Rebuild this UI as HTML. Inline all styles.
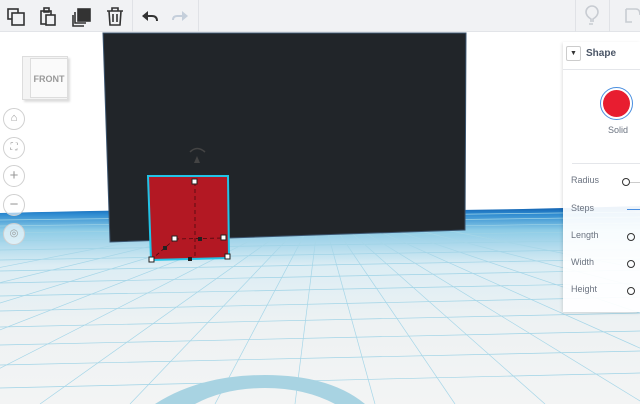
<!DOCTYPE html>
<html><head><style>
*{margin:0;padding:0;box-sizing:border-box}
body{width:640px;height:404px;overflow:hidden;font-family:"Liberation Sans",sans-serif;background:#fff;position:relative}
.tb{position:absolute;left:0;top:0;width:640px;height:32px;background:#f1f2f4;border-bottom:1px solid #e2e4e8}
.sep{position:absolute;top:0;width:1px;height:32px;background:#e0e2e6}
.panel{position:absolute;left:563px;top:42px;width:77px;height:270px;background:rgba(255,255,255,.93);box-shadow:-1px 1px 3px rgba(0,0,0,.12)}
.lbl{position:absolute;left:8px;font-size:9px;color:#6b7380}
.ring{position:absolute;width:8px;height:8px;border:1.3px solid #333;border-radius:50%}
.nav{position:absolute;left:3px;width:22px;height:22px;border:1px solid #d0d0d0;border-radius:50%;background:rgba(255,255,255,.6);color:#999;font-size:15px;line-height:19px;text-align:center}
</style></head><body>
<svg width="640" height="404" style="position:absolute;left:0;top:0">
<defs>
<linearGradient id="fl" x1="0" y1="0" x2="0" y2="1">
<stop offset="0" stop-color="#0b56a8"/><stop offset="0.04" stop-color="#2c8ad0"/><stop offset="0.12" stop-color="#8ccbe6"/><stop offset="0.3" stop-color="#dcedf4"/><stop offset="0.6" stop-color="#eef2f3"/><stop offset="1" stop-color="#f3f4f4"/>
</linearGradient>
</defs>
<path d="M0 213 Q200 208 320 210 T640 206 L640 404 L0 404Z" fill="url(#fl)"/>
<g stroke="#9fd3e6" stroke-width="0.7" fill="none">
<line x1="0" y1="220" x2="640" y2="212"/><line x1="0" y1="226" x2="640" y2="217"/><line x1="0" y1="233" x2="640" y2="223"/><line x1="0" y1="241" x2="640" y2="231"/><line x1="0" y1="250" x2="640" y2="240"/><line x1="0" y1="260" x2="640" y2="249"/><line x1="0" y1="271" x2="640" y2="259"/><line x1="0" y1="283" x2="640" y2="270"/><line x1="0" y1="296" x2="640" y2="283"/><line x1="0" y1="311" x2="640" y2="297"/><line x1="0" y1="327" x2="640" y2="313"/><line x1="0" y1="345" x2="640" y2="331"/><line x1="0" y1="365" x2="640" y2="351"/><line x1="0" y1="388" x2="640" y2="373"/>
</g>
<g stroke="#a6d6e8" stroke-width="0.7" fill="none">
<line x1="320" y1="205" x2="-700" y2="404"/><line x1="320" y1="205" x2="-500" y2="404"/><line x1="320" y1="205" x2="-330" y2="404"/><line x1="320" y1="205" x2="-190" y2="404"/><line x1="320" y1="205" x2="-70" y2="404"/><line x1="320" y1="205" x2="40" y2="404"/><line x1="320" y1="205" x2="130" y2="404"/><line x1="320" y1="205" x2="215" y2="404"/><line x1="320" y1="205" x2="295" y2="404"/><line x1="320" y1="205" x2="375" y2="404"/><line x1="320" y1="205" x2="455" y2="404"/><line x1="320" y1="205" x2="545" y2="404"/><line x1="320" y1="205" x2="645" y2="404"/><line x1="320" y1="205" x2="765" y2="404"/><line x1="320" y1="205" x2="910" y2="404"/><line x1="320" y1="205" x2="1090" y2="404"/><line x1="320" y1="205" x2="1320" y2="404"/>
</g>
<path d="M155 404 Q200 375 265 375 Q330 375 365 404 L335 404 Q305 388 265 388 Q225 388 195 404Z" fill="#a8d3e2"/>
<polygon points="103,33 466,33 465,230 110,242" fill="#212529" stroke="#3b5570" stroke-width="1"/>
<polygon points="148,176 228,176 229,258 151,260" fill="#b31823" stroke="#22c3e6" stroke-width="2"/>
<g stroke="#4a0a10" stroke-width="0.8" stroke-dasharray="4,3" fill="none"><line x1="195" y1="182" x2="195" y2="256"/><line x1="175" y1="239" x2="224" y2="238"/><line x1="175" y1="239" x2="152" y2="259"/></g>
<g fill="#fff" stroke="#222" stroke-width="1"><rect x="192" y="179" width="5" height="5"/><rect x="172" y="236" width="5" height="5"/><rect x="221" y="235" width="5" height="5"/><rect x="149" y="257" width="5" height="5"/><rect x="225" y="254" width="5" height="5"/></g>
<g fill="#222"><rect x="198" y="237" width="4" height="4"/><rect x="163" y="246" width="4" height="4"/><rect x="188" y="257" width="4" height="4"/></g>
<path d="M190 152 Q197 145 205 152" stroke="#444" stroke-width="1.5" fill="none"/><polygon points="194,163 197,156 200,163" fill="#444"/>
</svg>
<div class="tb">
<svg width="640" height="32" style="position:absolute;left:0;top:0" fill="none" stroke="#333" stroke-width="1.6">
<rect x="8" y="9" width="10" height="10"/><rect x="12" y="13" width="12" height="12" fill="#f1f2f4"/>
<rect x="41" y="11" width="10" height="13"/><rect x="44" y="8" width="5" height="4"/><rect x="46" y="15" width="9" height="10" fill="#f1f2f4"/>
<rect x="78" y="9" width="12" height="12" fill="#333"/><path d="M75 12 v11 h11 M73 15 v11 h11"/>
<path d="M107 11 h16 M112 11 v-3 h6 v3 M109 11 l1 14 h10 l1-14 M113 14 v8 M117 14 v8"/>
<path d="M143 16 h9 q5 0 5 5" stroke-width="2"/><polygon points="142,16 148,11 148,21" fill="#333" stroke="none"/>
<path d="M186 16 h-9 q-4 0 -4 4" stroke="#c5cfdb" stroke-width="2"/><polygon points="188,16 182,11 182,21" fill="#c5cfdb" stroke="none"/>
<path d="M591 22 v-3 q-5-3-5-7 a6 6 0 0 1 12 0 q0 4-5 7 v3 M589 24 h4" stroke="#c8ccd2"/>
<path d="M626 9 h10 q4 0 4 6 M626 9 v13 h6" stroke="#c8ccd2"/>
</svg>
<div class="sep" style="left:132px"></div><div class="sep" style="left:198px"></div><div class="sep" style="left:575px"></div><div class="sep" style="left:609px"></div>
</div>
<div style="position:absolute;left:22px;top:56px;width:46px;height:44px;background:#f4f4f4;border:1px solid #ddd;box-shadow:2px 2px 2px #ddd"></div>
<div style="position:absolute;left:30px;top:58px;width:38px;height:40px;background:#fafafa;border:1px solid #ddd;font-size:9px;font-weight:bold;color:#999;text-align:center;line-height:40px">FRONT</div>
<div class="nav" style="top:108px;font-size:11px">⌂</div><div class="nav" style="top:137px;font-size:10px">⛶</div><div class="nav" style="top:165px">+</div><div class="nav" style="top:194px">−</div><div class="nav" style="top:223px;font-size:10px">◎</div>
<div class="panel">
<div style="position:absolute;left:3px;top:4px;width:15px;height:15px;border:1px solid #ccc;border-radius:2px;font-size:7px;text-align:center;line-height:14px;color:#333">▼</div>
<div style="position:absolute;left:23px;top:6px;font-size:10px;font-weight:bold;color:#4a5566">Shape</div>
<div style="position:absolute;left:0;top:27px;width:77px;height:1px;background:#e4e6ea"></div>
<div style="position:absolute;left:37px;top:45px;width:33px;height:33px;border-radius:50%;border:1.5px solid #4a8fe0;background:#fff"></div>
<div style="position:absolute;left:40px;top:48px;width:27px;height:27px;border-radius:50%;background:#e81d30"></div>
<div style="position:absolute;left:45px;top:83px;font-size:9px;color:#6b7380">Solid</div>
<div style="position:absolute;left:9px;top:121px;width:68px;height:1px;background:#e4e6ea"></div>
<div class="lbl" style="top:133px">Radius</div><div class="ring" style="left:59px;top:136px"></div><div style="position:absolute;left:67px;top:140px;width:10px;height:1px;background:#ccc"></div>
<div class="lbl" style="top:161px">Steps</div><div style="position:absolute;left:64px;top:167px;width:13px;height:1px;background:#4a8fe0"></div>
<div class="lbl" style="top:188px">Length</div><div class="ring" style="left:64px;top:191px"></div>
<div class="lbl" style="top:215px">Width</div><div class="ring" style="left:64px;top:218px"></div>
<div class="lbl" style="top:242px">Height</div><div class="ring" style="left:64px;top:245px"></div>
</div>
</body></html>
